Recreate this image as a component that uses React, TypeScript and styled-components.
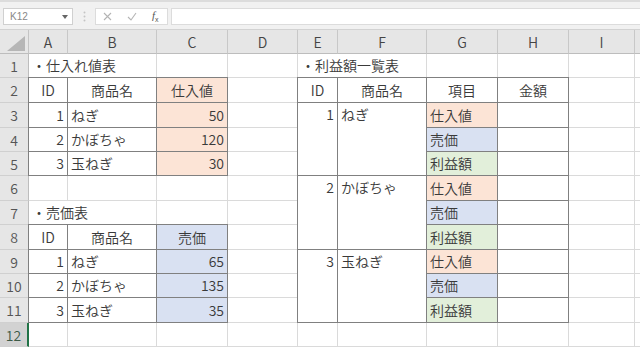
import React from 'react'
import styled, { createGlobalStyle } from 'styled-components'

const GlobalStyle = createGlobalStyle`
	html, body {
		margin: 0;
		padding: 0;
		background: #fff;
	}
	body {
		font-family: "Noto Sans CJK JP", "Noto Sans", sans-serif;
	}
`

const Window = styled.div`
	width: 640px;
	height: 347px;
	overflow: hidden;
	display: flex;
	flex-direction: column;
	background: #fff;
`

const Toolbar = styled.div`
	height: 30px;
	box-sizing: border-box;
	display: flex;
	align-items: flex-start;
	padding: 6px 0 0 3px;
	background: #f1f1f1;
	border-top: 2px solid #dcdcdc;
	border-bottom: 1px solid #d2d2d2;
`

const NameBox = styled.div`
	width: 70px;
	height: 17px;
	box-sizing: border-box;
	display: flex;
	align-items: center;
	justify-content: space-between;
	padding: 0 4px 0 6px;
	background: #fff;
	border: 1px solid #d0d0d0;
	font-family: "Liberation Sans", Arial, sans-serif;
	font-size: 10px;
	color: #888;
`

const Grip = styled.div`
	width: 22px;
	height: 17px;
	display: flex;
	align-items: center;
	justify-content: center;
`

const FxBox = styled.div`
	width: 73px;
	height: 17px;
	box-sizing: border-box;
	display: flex;
	background: #fff;
	border: 1px solid #dcdcdc;
`

const FxSlot = styled.div`
	flex: 1;
	display: flex;
	align-items: center;
	justify-content: center;
`

const FxLabel = styled.span`
	font-family: "Liberation Serif", serif;
	font-style: italic;
	font-size: 11px;
	color: #555;
	sub {
		font-size: 7px;
		font-style: normal;
		font-family: "Liberation Sans", sans-serif;
	}
`

const FormulaInput = styled.div`
	flex: 1;
	height: 17px;
	margin-left: 3px;
	box-sizing: border-box;
	background: #fff;
	border: 1px solid #dcdcdc;
	border-right: none;
`

const Sheet = styled.div`
	display: grid;
	grid-template-columns: 29px 39px 89px 71px 70px 40px 89px 71px 71px 66px 1fr;
	grid-template-rows: 24px 24px 25px 25px 24px 24px 25px 24px 25px 24px 24px 25px 24px;
`

const Corner = styled.div`
	background: #e6e6e6;
	border-right: 1px solid #c4c4c4;
	border-bottom: 1px solid #bdbdbd;
	box-sizing: border-box;
	display: flex;
	align-items: flex-end;
	justify-content: flex-end;
	padding: 0 3px 2px 0;
`

const ColHead = styled.div`
	background: #e6e6e6;
	border-right: 1px solid #c8c8c8;
	border-bottom: 1px solid #bdbdbd;
	box-sizing: border-box;
	display: flex;
	align-items: center;
	justify-content: center;
	font-size: 14px;
	font-weight: 350;
	color: #444;
`

const RowHead = styled.div<{ $selected?: boolean }>`
	background: ${(p) => (p.$selected ? '#d2d2d2' : '#e6e6e6')};
	border-bottom: 1px solid #d0d0d0;
	border-right: ${(p) => (p.$selected ? '2px solid #217346' : '1px solid #bdbdbd')};
	box-sizing: border-box;
	display: flex;
	align-items: center;
	justify-content: center;
	font-size: 14px;
	font-weight: 350;
	color: ${(p) => (p.$selected ? '#3d5a47' : '#555')};
`

type Align = 'left' | 'right' | 'center'
type Fill = 'peach' | 'blue' | 'green'

const fills: Record<Fill, string> = {
	peach: '#fce4d6',
	blue: '#d9e1f2',
	green: '#e2efda',
}

const justify: Record<Align, string> = {
	left: 'flex-start',
	right: 'flex-end',
	center: 'center',
}

type CellProps = {
	$align: Align
	$fill?: Fill
	$box?: boolean
	$rows: number
	$cols: number
	$top?: boolean
}

const Cell = styled.div<CellProps>`
	box-sizing: border-box;
	display: flex;
	align-items: ${(p) => (p.$top ? 'flex-start' : 'center')};
	justify-content: ${(p) => justify[p.$align]};
	padding: 0 3px;
	font-size: 14px;
	font-weight: 350;
	line-height: 23px;
	color: #3a3a3a;
	white-space: nowrap;
	background: ${(p) => (p.$fill ? fills[p.$fill] : 'transparent')};
	border-right: 1px solid #dadada;
	border-bottom: 1px solid #dadada;
	grid-row: span ${(p) => p.$rows};
	grid-column: span ${(p) => p.$cols};
	${(p) =>
		p.$box &&
		`
		border: 1px solid #808080;
		margin: -1px 0 0 -1px;
		position: relative;
		z-index: 1;
	`}
`

type Spec = {
	text?: string
	align?: Align
	fill?: Fill
	box?: boolean
	rows?: number
	cols?: number
	top?: boolean
}

const COLS = ['A', 'B', 'C', 'D', 'E', 'F', 'G', 'H', 'I', 'J']

const head = (text: string, fill?: Fill): Spec => ({ text, align: 'center', box: true, fill })
const num = (text: string, fill?: Fill): Spec => ({ text, align: 'right', box: true, fill })
const name = (text: string, fill?: Fill): Spec => ({ text, align: 'left', box: true, fill })
const group = (text: string, align: Align): Spec => ({ text, align, box: true, rows: 3, top: true })
const amount: Spec = { box: true }

const data: Record<number, Record<string, Spec>> = {
	1: {
		A: { text: '・仕入れ値表', align: 'left', cols: 2 },
		E: { text: '・利益額一覧表', align: 'left', cols: 2 },
	},
	2: {
		A: head('ID'),
		B: head('商品名'),
		C: head('仕入値', 'peach'),
		E: head('ID'),
		F: head('商品名'),
		G: head('項目'),
		H: head('金額'),
	},
	3: {
		A: num('1'),
		B: name('ねぎ'),
		C: num('50', 'peach'),
		E: group('1', 'right'),
		F: group('ねぎ', 'left'),
		G: name('仕入値', 'peach'),
		H: amount,
	},
	4: { A: num('2'), B: name('かぼちゃ'), C: num('120', 'peach'), G: name('売価', 'blue'), H: amount },
	5: { A: num('3'), B: name('玉ねぎ'), C: num('30', 'peach'), G: name('利益額', 'green'), H: amount },
	6: { E: group('2', 'right'), F: group('かぼちゃ', 'left'), G: name('仕入値', 'peach'), H: amount },
	7: { A: { text: '・売価表', align: 'left', cols: 2 }, G: name('売価', 'blue'), H: amount },
	8: { A: head('ID'), B: head('商品名'), C: head('売価', 'blue'), G: name('利益額', 'green'), H: amount },
	9: {
		A: num('1'),
		B: name('ねぎ'),
		C: num('65', 'blue'),
		E: group('3', 'right'),
		F: group('玉ねぎ', 'left'),
		G: name('仕入値', 'peach'),
		H: amount,
	},
	10: { A: num('2'), B: name('かぼちゃ'), C: num('135', 'blue'), G: name('売価', 'blue'), H: amount },
	11: { A: num('3'), B: name('玉ねぎ'), C: num('35', 'blue'), G: name('利益額', 'green'), H: amount },
}

const CornerMark = () => (
	<svg width="18" height="15" viewBox="0 0 18 15">
		<polygon points="18,0 18,15 0,15" fill="#b6b6b6" />
	</svg>
)

const DropArrow = () => (
	<svg width="6" height="4" viewBox="0 0 6 4">
		<polygon points="0,0 6,0 3,4" fill="#666" />
	</svg>
)

const GripDots = () => (
	<svg width="3" height="11" viewBox="0 0 3 11">
		<circle cx="1.5" cy="1.5" r="1" fill="#c4c4c4" />
		<circle cx="1.5" cy="5.5" r="1" fill="#c4c4c4" />
		<circle cx="1.5" cy="9.5" r="1" fill="#c4c4c4" />
	</svg>
)

const CancelIcon = () => (
	<svg width="9" height="9" viewBox="0 0 9 9">
		<path d="M1 1 L8 8 M8 1 L1 8" stroke="#b4b4b4" strokeWidth="1.1" fill="none" />
	</svg>
)

const EnterIcon = () => (
	<svg width="10" height="9" viewBox="0 0 10 9">
		<path d="M1 5 L4 8 L9 1" stroke="#b4b4b4" strokeWidth="1.1" fill="none" />
	</svg>
)

const FormulaBar = () => (
	<Toolbar>
		<NameBox>
			<span>K12</span>
			<DropArrow />
		</NameBox>
		<Grip>
			<GripDots />
		</Grip>
		<FxBox>
			<FxSlot>
				<CancelIcon />
			</FxSlot>
			<FxSlot>
				<EnterIcon />
			</FxSlot>
			<FxSlot>
				<FxLabel>
					f<sub>x</sub>
				</FxLabel>
			</FxSlot>
		</FxBox>
		<FormulaInput />
	</Toolbar>
)

const renderCells = () => {
	const covered = new Set<string>()
	const out: React.ReactNode[] = []
	for (let r = 1; r <= 12; r++) {
		out.push(
			<RowHead key={`h${r}`} $selected={r === 12}>
				{r}
			</RowHead>
		)
		COLS.forEach((c, ci) => {
			if (covered.has(`${r}${c}`)) return
			const spec = data[r]?.[c] ?? {}
			const rows = spec.rows ?? 1
			const cols = spec.cols ?? 1
			for (let dr = 0; dr < rows; dr++) {
				for (let dc = 0; dc < cols; dc++) {
					if (dr || dc) covered.add(`${r + dr}${COLS[ci + dc]}`)
				}
			}
			out.push(
				<Cell
					key={`${c}${r}`}
					$align={spec.align ?? 'left'}
					$fill={spec.fill}
					$box={spec.box}
					$rows={rows}
					$cols={cols}
					$top={spec.top}
				>
					{spec.text}
				</Cell>
			)
		})
	}
	return out
}

export default function App() {
	return (
		<Window>
			<GlobalStyle />
			<FormulaBar />
			<Sheet>
				<Corner>
					<CornerMark />
				</Corner>
				{COLS.map((c) => (
					<ColHead key={c}>{c === 'J' ? '' : c}</ColHead>
				))}
				{renderCells()}
			</Sheet>
		</Window>
	)
}
